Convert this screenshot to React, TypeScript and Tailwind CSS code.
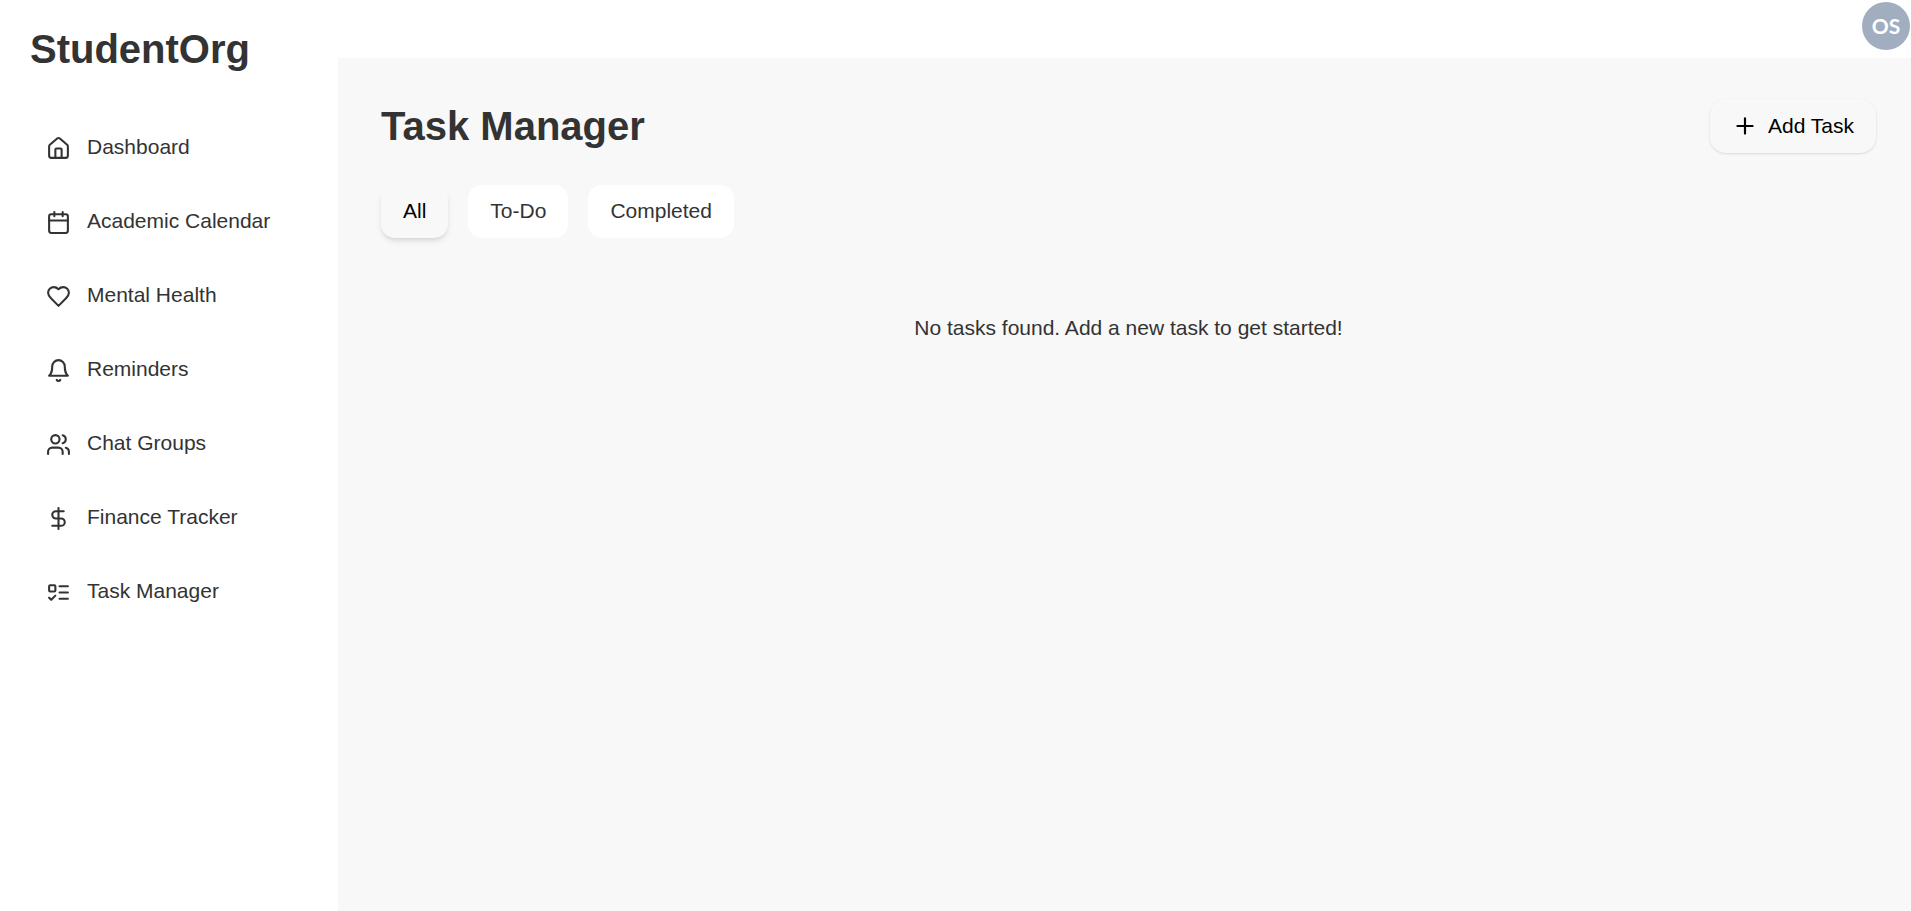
import { Calendar, DollarSign, House, Plus, Users } from "lucide-react";
import { useState, type ReactNode, type SVGProps } from "react";

function Stroked({ children, ...props }: SVGProps<SVGSVGElement> & { children?: ReactNode }) {
  return (
    <svg viewBox="0 0 24 24" fill="none" stroke="currentColor" strokeWidth="2" strokeLinecap="round" strokeLinejoin="round" {...props}>
      {children}
    </svg>
  );
}

function Heart(props: SVGProps<SVGSVGElement>) {
  return (
    <Stroked {...props}>
      <path d="M19 14c1.49-1.46 3-3.21 3-5.5A5.5 5.5 0 0 0 16.5 3c-1.76 0-3 .5-4.5 2-1.5-1.5-2.74-2-4.5-2A5.5 5.5 0 0 0 2 8.5c0 2.3 1.5 4.05 3 5.5l7 7Z" />
    </Stroked>
  );
}

function Bell(props: SVGProps<SVGSVGElement>) {
  return (
    <Stroked {...props}>
      <path d="M6 8a6 6 0 0 1 12 0c0 7 3 9 3 9H3s3-2 3-9" />
      <path d="M10.3 21a1.94 1.94 0 0 0 3.4 0" />
    </Stroked>
  );
}

function ListTodo(props: SVGProps<SVGSVGElement>) {
  return (
    <Stroked {...props}>
      <rect x="3" y="5" width="6" height="6" rx="1" />
      <path d="m3 17 2 2 4-4" />
      <path d="M13 6h8" />
      <path d="M13 12h8" />
      <path d="M13 18h8" />
    </Stroked>
  );
}

const links = [
  { label: "Dashboard", icon: House },
  { label: "Academic Calendar", icon: Calendar },
  { label: "Mental Health", icon: Heart },
  { label: "Reminders", icon: Bell },
  { label: "Chat Groups", icon: Users },
  { label: "Finance Tracker", icon: DollarSign },
  { label: "Task Manager", icon: ListTodo },
];

const filters = ["All", "To-Do", "Completed"];

export default function App() {
  const [filter, setFilter] = useState("All");
  return (
    <div className="flex min-h-screen bg-white font-['Liberation_Sans',Arial,sans-serif] text-[21px] text-[#333333]">
      <aside className="w-[338px] shrink-0 px-[30px]">
        <h1 className="pt-6 text-[40px] leading-[50px] font-bold">StudentOrg</h1>
        <nav className="mt-11 flex flex-col gap-4">
          {links.map(({ label, icon: Icon }) => (
            <a key={label} href="#" className="flex items-center gap-4 px-4 py-3 leading-[34px]">
              <Icon className="mt-0.5 size-[25px]" aria-hidden="true" />
              {label}
            </a>
          ))}
        </nav>
      </aside>
      <div className="flex min-w-0 flex-1 flex-col">
        <header className="flex h-[58px] justify-end pt-0.5 pr-px">
          <button aria-label="Account" className="size-12 rounded-full bg-[#a0aec0] font-['Lato',sans-serif] font-bold text-white">OS</button>
        </header>
        <main className="flex-1 bg-[#f8f8f8] py-10 pr-[35px] pl-[43px]">
          <div className="flex items-center justify-between">
            <h2 className="text-[40px] leading-[56px] font-bold">Task Manager</h2>
            <button className="flex h-[54px] items-center gap-2.5 rounded-2xl px-[22px] text-black shadow">
              <Plus className="size-[26px]" aria-hidden="true" />
              Add Task
            </button>
          </div>
          <div className="mt-[31px] flex gap-5">
            {filters.map((name) => (
              <button
                key={name}
                onClick={() => setFilter(name)}
                className={name === filter ? "h-[53px] rounded-[14px] px-[22px] pb-0.5 text-black shadow-md" : "h-[53px] rounded-[14px] bg-white px-[22px] pb-0.5"}
              >
                {name}
              </button>
            ))}
          </div>
          <p className="mt-[74px] text-center leading-8">No tasks found. Add a new task to get started!</p>
        </main>
      </div>
    </div>
  );
}
